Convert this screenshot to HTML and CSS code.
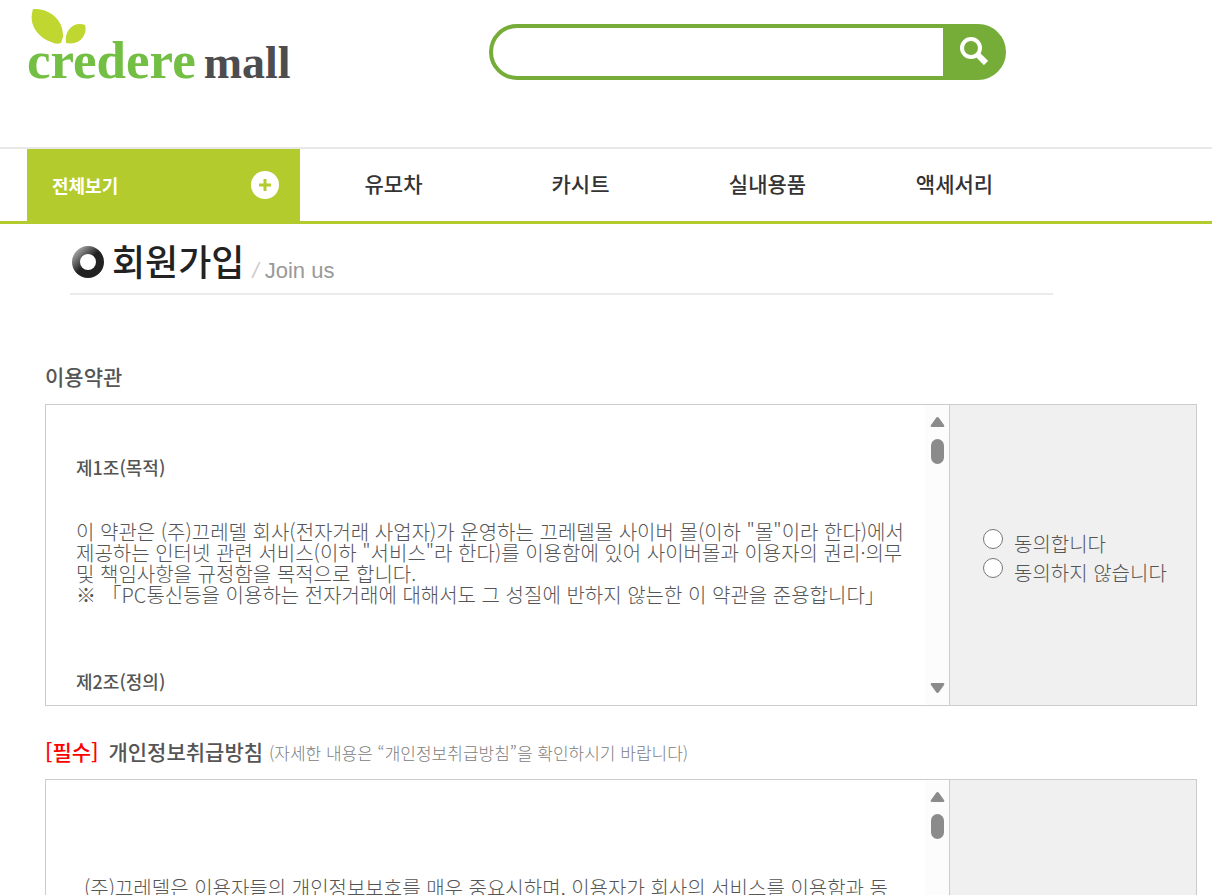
FILE: index.html
```html
<!DOCTYPE html>
<html lang="ko">
<head>
  <meta charset="UTF-8">
  <title>credere mall - 회원가입</title>
  <link rel="stylesheet" href="styles.css">
</head>
<body>
  <header class="header">
    <a class="logo" href="#">
      <svg class="logo-leaf" viewBox="0 0 56 36" aria-hidden="true">
        <path d="M2 0C16-1 33 9 32 28L30 34Q25 36 20 33C6 28-3 15 2 0Z"/>
        <path d="M54 16C43 12 33 21 35 34Q47 36 52 28Q56 22 54 16Z"/>
      </svg>
      <span class="logo-text">credere</span>
      <span class="logo-mall">mall</span>
    </a>
    <form class="search">
      <input class="search-input" type="text" aria-label="검색어">
      <button class="search-btn" type="button" aria-label="검색">
        <svg width="30" height="30" viewBox="0 0 30 30" fill="none" stroke="#fff">
          <circle cx="13" cy="13" r="9" stroke-width="4"/>
          <path d="M19 19L28 28" stroke-width="6"/>
        </svg>
      </button>
    </form>
  </header>

  <nav class="nav">
    <button class="all-btn" type="button">
      전체보기
      <svg width="30" height="30" viewBox="0 0 30 30">
        <circle cx="15" cy="15" r="14" fill="#fff"/>
        <path d="M15 9V21M9 15H21" stroke="#b3cb2d" stroke-width="3"/>
      </svg>
    </button>
    <div class="menu">
      <a href="#">유모차</a>
      <a href="#">카시트</a>
      <a href="#">실내용품</a>
      <a href="#">액세서리</a>
    </div>
  </nav>

  <div class="title">
    <svg class="title-ring" width="32" height="32" viewBox="0 0 32 32">
      <defs>
        <linearGradient id="ring" x1="0" y1="0" x2="1" y2="1">
          <stop offset="0" stop-color="#aaa"/>
          <stop offset="0.5" stop-color="#222"/>
          <stop offset="1" stop-color="#222"/>
        </linearGradient>
      </defs>
      <circle cx="16" cy="16" r="12" fill="none" stroke="url(#ring)" stroke-width="8"/>
    </svg>
    <h1>회원가입</h1>
    <span class="title-sub"><i>/</i> Join us</span>
  </div>

  <main class="join">
    <h2 class="section-title">이용약관</h2>
    <div class="terms">
      <div class="terms-text">
        <h3>제1조(목적)</h3>
        <p>
          이 약관은 (주)끄레델 회사(전자거래 사업자)가 운영하는 끄레델몰 사이버 몰(이하 "몰"이라 한다)에서<br>
          제공하는 인터넷 관련 서비스(이하 "서비스"라 한다)를 이용함에 있어 사이버몰과 이용자의 권리·의무<br>
          및 책임사항을 규정함을 목적으로 합니다.<br>
          ※ 「PC통신등을 이용하는 전자거래에 대해서도 그 성질에 반하지 않는한 이 약관을 준용합니다」
        </p>
        <h3>제2조(정의)</h3>
      </div>
      <div class="scrollbar">
        <svg width="15" height="10" viewBox="0 0 15 10"><path d="M6 1Q7.5-1 9 1L14 8Q15 10 13 10H2Q0 10 1 8Z"/></svg>
        <div class="thumb"></div>
        <svg class="down" width="15" height="10" viewBox="0 0 15 10"><path d="M6 9Q7.5 11 9 9L14 2Q15 0 13 0H2Q0 0 1 2Z"/></svg>
      </div>
      <div class="agree">
        <label><input type="radio" name="agree1"> 동의합니다</label>
        <label><input type="radio" name="agree1"> 동의하지 않습니다</label>
      </div>
    </div>

    <h2 class="section-title"><span class="required">[필수]</span> 개인정보취급방침 <small>(자세한 내용은 “개인정보취급방침”을 확인하시기 바랍니다)</small></h2>
    <div class="terms">
      <div class="terms-text privacy">
        <p>(주)끄레델은 이용자들의 개인정보보호를 매우 중요시하며, 이용자가 회사의 서비스를 이용함과 동</p>
      </div>
      <div class="scrollbar">
        <svg width="15" height="10" viewBox="0 0 15 10"><path d="M6 1Q7.5-1 9 1L14 8Q15 10 13 10H2Q0 10 1 8Z"/></svg>
        <div class="thumb"></div>
        <svg class="down" width="15" height="10" viewBox="0 0 15 10"><path d="M6 9Q7.5 11 9 9L14 2Q15 0 13 0H2Q0 0 1 2Z"/></svg>
      </div>
      <div class="agree"></div>
    </div>
  </main>
</body>
</html>
```

FILE: styles.css
```css
* {
  box-sizing: border-box;
}

html {
  overflow: hidden;
  height: 100%;
}

body {
  margin: 0;
  height: 100%;
  overflow: hidden;
  background-color: #fff;
  color: #555;
  font-family: "Noto Sans CJK KR", sans-serif;
  font-size: 20px;
}

a {
  color: inherit;
  text-decoration: none;
}

.header {
  display: flex;
  align-items: flex-start;
  height: 147px;
  padding-left: 27px;
}

.logo {
  position: relative;
  display: flex;
  align-items: baseline;
  gap: 8px;
  width: 462px;
  padding-top: 30px;
  font-family: "Liberation Serif", serif;
  font-weight: bold;
  line-height: 60px;
}

.logo-leaf {
  position: absolute;
  left: 4px;
  top: 9px;
  width: 56px;
  height: 36px;
  fill: #bfd730;
}

.logo-text {
  color: #72bf44;
  font-size: 53px;
}

.logo-mall {
  color: #4d4d4f;
  font-size: 46px;
}

.search {
  display: flex;
  width: 517px;
  height: 56px;
  margin-top: 24px;
  border: 4px solid #76ac38;
  border-radius: 28px;
  background-color: #76ac38;
}

.search-input {
  flex: 1;
  min-width: 0;
  padding: 0 20px;
  border: none;
  border-radius: 24px 0 0 24px;
  background-color: #fff;
  font-size: 20px;
}

.search-btn {
  width: 59px;
  padding: 0 0 4px;
  border: none;
  background: none;
  cursor: pointer;
}

.search-btn svg {
  display: block;
  margin: 0 auto;
}

.nav {
  display: flex;
  height: 77px;
  padding-left: 27px;
  border-top: 2px solid #e8e8e8;
  border-bottom: 3px solid #b3cb2d;
}

.all-btn {
  display: flex;
  align-items: center;
  justify-content: space-between;
  width: 273px;
  padding: 0 20px 0 25px;
  border: none;
  background-color: #b3cb2d;
  color: #fff;
  font-family: inherit;
  font-size: 18px;
  font-weight: bold;
  cursor: pointer;
}

.menu {
  display: grid;
  grid-template-columns: repeat(4, 187px);
  align-items: center;
  padding-bottom: 4px;
  text-align: center;
  color: #333;
  font-size: 21px;
  font-weight: 500;
}

.title {
  display: flex;
  align-items: center;
  width: 983px;
  height: 71px;
  padding-top: 6px;
  margin-left: 70px;
  border-bottom: 2px solid #ebebeb;
}

.title-ring {
  margin: 0 8px 0 2px;
}

.title h1 {
  padding-bottom: 4px;
  margin: 0;
  color: #222;
  font-size: 36px;
  font-weight: 500;
  line-height: 56px;
}

.title-sub {
  padding-top: 18px;
  margin-left: 8px;
  color: #999;
  font-family: "Liberation Sans", sans-serif;
  font-size: 22px;
}

.title-sub i {
  color: #ccc;
}

.join {
  padding: 64px 15px 0 45px;
}

.section-title {
  height: 34px;
  margin: 0 0 11px;
  font-size: 21px;
  font-weight: 500;
  line-height: 34px;
}

.section-title small {
  color: #808080;
  font-size: 17px;
  font-weight: 300;
}

.required {
  margin-right: 4px;
  color: #f00;
}

.terms {
  display: flex;
  height: 302px;
  margin-bottom: 28px;
  border: 1px solid #ccc;
}

.terms-text {
  flex: 1;
  min-width: 0;
  padding: 50px 0 0 30px;
  overflow: hidden;
}

.terms-text h3 {
  margin: 0;
  font-size: 18px;
  font-weight: 500;
  line-height: 24px;
}

.terms-text p {
  margin: 42px 0 64px;
  font-weight: 300;
  line-height: 21px;
  white-space: nowrap;
}

.privacy p {
  margin: 47px 0 0 8px;
}

.scrollbar {
  display: flex;
  flex-direction: column;
  align-items: center;
  width: 24px;
  padding: 12px 0;
  background-color: #fcfcfc;
  fill: #8b8b8b;
}

.thumb {
  width: 13px;
  height: 25px;
  margin-top: 12px;
  border-radius: 7px;
  background-color: #8b8b8b;
}

.scrollbar .down {
  margin-top: auto;
}

.agree {
  display: flex;
  flex-direction: column;
  justify-content: center;
  width: 247px;
  padding: 6px 0 0 33px;
  border-left: 1px solid #ccc;
  background-color: #f0f0f0;
  font-weight: 300;
  line-height: 29px;
}

.agree label {
  display: flex;
  gap: 11px;
}

.agree input {
  width: 20px;
  height: 20px;
  margin: 0;
}
```
